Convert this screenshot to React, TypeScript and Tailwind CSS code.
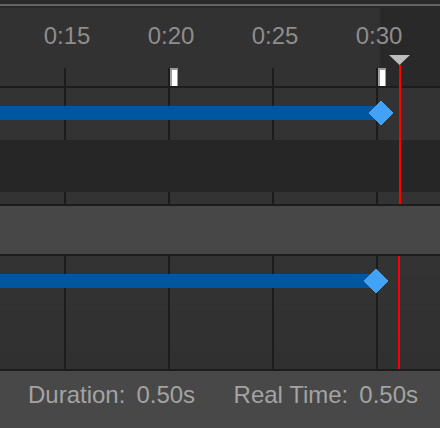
import React from "react";

const font = { fontFamily: '"Liberation Sans", Arial, sans-serif' };

function GridLines() {
  return (
    <div className="absolute inset-0 flex pl-[64px] gap-[102px]">
      {[0, 1, 2, 3].map((i) => (
        <div key={i} className="h-full w-[2px] shrink-0 bg-[#1c1c1c]" />
      ))}
    </div>
  );
}

function Diamond() {
  return (
    <svg width={26} height={26} viewBox="0 0 26 26" className="-ml-[13px] shrink-0">
      <polygon
        points="13,1 25,13 13,25 1,13"
        fill="#41a2f6"
        stroke="#41a2f6"
        strokeWidth={1}
        strokeLinejoin="round"
      />
    </svg>
  );
}

function KeyBar({ width }: { width: number }) {
  return (
    <div className="relative flex h-[26px] items-center">
      <div className="h-[14px] shrink-0 bg-[#0156a0]" style={{ width }} />
      <Diamond />
    </div>
  );
}

export default function App() {
  const labels = ["0:15", "0:20", "0:25", "0:30"];
  const markers = [false, true, false, true];
  return (
    <div className="relative w-[440px] h-[428px] overflow-hidden bg-[#333333]" style={font}>
      {/* top strip */}
      <div className="h-[4px] bg-[#2a2a2a]" />
      <div className="h-[2px] bg-[#636363]" />
      <div className="h-[2px] bg-[#2a2a2a]" />

      {/* ruler header */}
      <div className="flex h-[78px] flex-col bg-[linear-gradient(to_right,#323232_380px,#292929_380px)]">
        <div className="flex pl-[15px] pt-[16px] text-[24px] leading-none text-[#8d8d8d]">
          {labels.map((l) => (
            <span key={l} className="w-[104px] shrink-0 text-center">
              {l}
            </span>
          ))}
        </div>
        <div className="mt-auto flex h-[18px] pl-[64px]">
          {markers.map((m, i) => (
            <div key={i} className="flex w-[104px] shrink-0">
              <div className="h-full w-[2px] bg-[#1c1c1c]" />
              {m && (
                <div className="h-full w-[8px] bg-white border-l-2 border-t-2 border-r border-[#9c9c9c]" />
              )}
            </div>
          ))}
        </div>
      </div>
      <div className="h-[2px] bg-[#1c1c1c]" />

      {/* track 1 */}
      <div className="relative h-[52px] pt-[12px]">
        <GridLines />
        <KeyBar width={381} />
      </div>
      <div className="h-[52px] bg-[#262626]" />
      <div className="relative h-[12px]">
        <GridLines />
      </div>
      <div className="h-[2px] bg-[#1c1c1c]" />

      {/* separator */}
      <div className="h-[48px] bg-[#474747]" />
      <div className="h-[2px] bg-[#1c1c1c]" />

      {/* track 2 */}
      <div className="relative h-[113px] bg-gradient-to-b from-[#333333] to-[#303030] pt-[12px]">
        <GridLines />
        <KeyBar width={376} />
        <div className="absolute left-[398px] top-0 bottom-0 w-[2px] bg-[#ff0000]" />
      </div>
      <div className="h-[2px] bg-[#1c1c1c]" />

      {/* footer */}
      <div className="flex h-[57px] items-start justify-between bg-[#484848] pl-[28px] pr-[22px] pt-[12px] text-[24px] leading-none text-[#a3a3a3]">
        <div className="flex gap-[11px]">
          <span>Duration:</span>
          <span>0.50s</span>
        </div>
        <div className="flex gap-[11px]">
          <span>Real Time:</span>
          <span>0.50s</span>
        </div>
      </div>

      {/* playhead (over the ruler and first track) */}
      <div className="absolute left-[389px] top-[55px] flex w-[21px] flex-col items-center">
        <svg width={21} height={10} viewBox="0 0 21 10">
          <polygon points="0,0 21,0 10.5,10" fill="#bdbdbd" />
        </svg>
        <div className="h-[139px] w-[2px] bg-[#ff0000]" />
      </div>
    </div>
  );
}
